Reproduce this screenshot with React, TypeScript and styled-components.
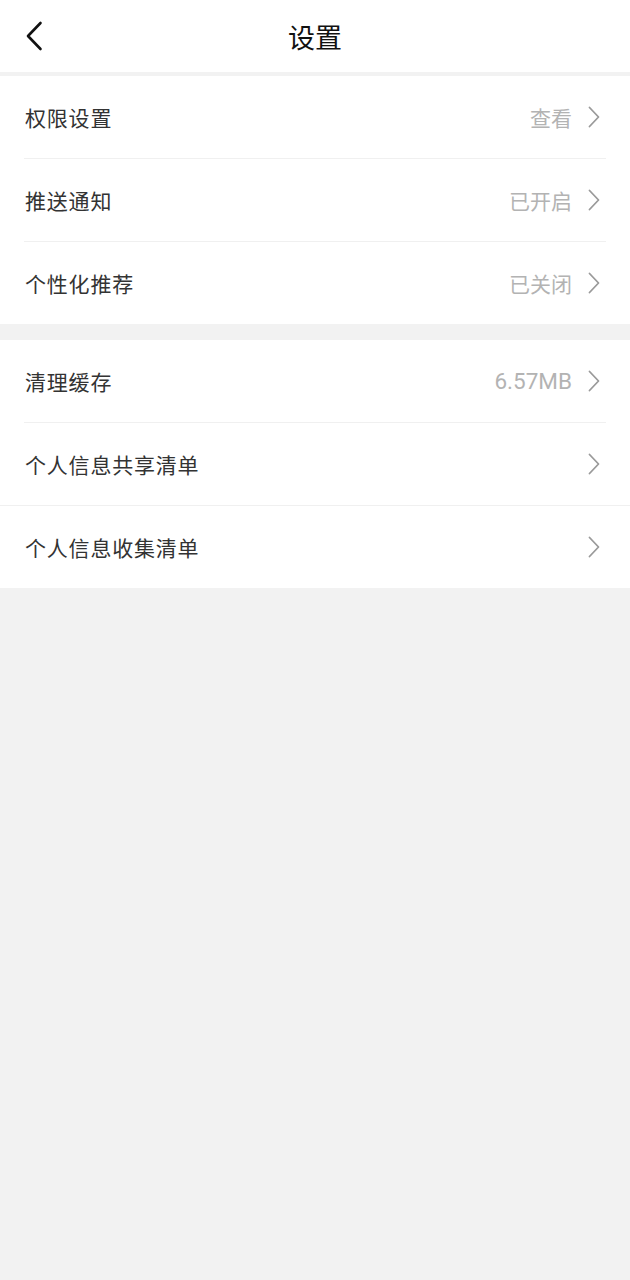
import React from 'react';
import styled, { createGlobalStyle } from 'styled-components';

const GlobalStyle = createGlobalStyle`
  html, body {
    margin: 0;
    padding: 0;
    background-color: #f2f2f2;
    font-family: "Noto Sans CJK SC", "Noto Sans", sans-serif;
  }
`;

const Page = styled.div`
  width: 630px;
  min-height: 1280px;
  background-color: #f2f2f2;
`;

const Header = styled.header`
  position: relative;
  height: 72px;
  display: flex;
  align-items: center;
  justify-content: center;
  background-color: #fff;
  border-bottom: 4px solid #f2f2f2;
`;

const BackButton = styled.button`
  position: absolute;
  left: 22px;
  top: 20px;
  width: 24px;
  height: 32px;
  padding: 0;
  border: none;
  background: none;
  display: flex;
  align-items: center;
  justify-content: center;
`;

const Title = styled.h1`
  margin: 0;
  font-size: 27px;
  font-weight: 400;
  color: #111;
  line-height: 1;
`;

const Group = styled.section<{ $gap?: boolean }>`
  background-color: #fff;
  margin-top: ${(p) => (p.$gap ? '16px' : '0')};
`;

const Row = styled.div<{ $fullLine?: boolean }>`
  height: 82px;
  display: flex;
  align-items: center;
  border-top: 1px solid #f0f0f0;
  margin: 0 ${(p) => (p.$fullLine ? '0' : '24px')};
  padding-left: ${(p) => (p.$fullLine ? '25px' : '1px')};
  padding-right: ${(p) => (p.$fullLine ? '30px' : '6px')};

  &:first-child {
    border-top: none;
  }
`;

const Label = styled.span`
  flex: 1;
  font-size: 21px;
  color: #333;
  letter-spacing: 0.8px;
`;

const Value = styled.span<{ $latin?: boolean }>`
  font-size: ${(p) => (p.$latin ? '22.5px' : '21px')};
  color: #b3b3b3;
  margin-right: 16px;
  font-family: ${(p) => (p.$latin ? 'Roboto, sans-serif' : '"Noto Sans CJK SC", sans-serif')};
`;

const Chevron = () => (
  <svg width="12" height="22" viewBox="0 0 12 22" fill="none">
    <path d="M1.5 1.5 L10.5 11 L1.5 20.5" stroke="#9a9a9a" strokeWidth="1.8" strokeLinecap="round" strokeLinejoin="round" />
  </svg>
);

const BackIcon = () => (
  <svg width="18" height="30" viewBox="0 0 18 30" fill="none">
    <path d="M15.5 2 L3 15 L15.5 28" stroke="#111" strokeWidth="2.6" strokeLinecap="round" strokeLinejoin="round" />
  </svg>
);

type Item = { label: string; value?: string; fullLine?: boolean };

const groups: Item[][] = [
  [
    { label: '权限设置', value: '查看' },
    { label: '推送通知', value: '已开启' },
    { label: '个性化推荐', value: '已关闭' },
  ],
  [
    { label: '清理缓存', value: '6.57MB' },
    { label: '个人信息共享清单' },
    { label: '个人信息收集清单', fullLine: true },
  ],
];

const isLatin = (s: string) => /^[\x00-\x7f]+$/.test(s);

const App = () => {
  return (
    <Page>
      <GlobalStyle />
      <Header>
        <BackButton aria-label="返回">
          <BackIcon />
        </BackButton>
        <Title>设置</Title>
      </Header>
      {groups.map((items, gi) => (
        <Group key={gi} $gap={gi > 0}>
          {items.map((item) => (
            <Row key={item.label} $fullLine={item.fullLine}>
              <Label>{item.label}</Label>
              {item.value && <Value $latin={isLatin(item.value)}>{item.value}</Value>}
              <Chevron />
            </Row>
          ))}
        </Group>
      ))}
    </Page>
  );
};

export default App;
